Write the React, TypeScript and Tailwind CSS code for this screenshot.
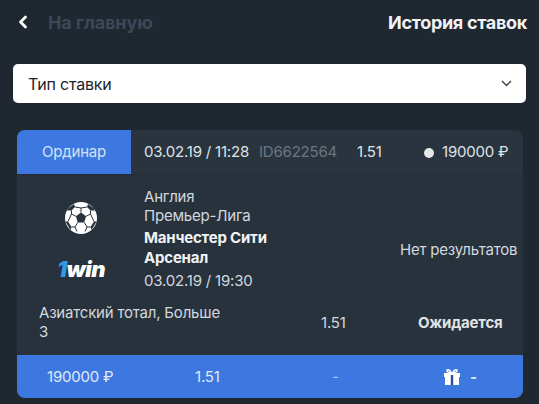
export default function App() {
  return (
    <div className="w-[539px] h-[404px] overflow-hidden bg-[#1f2731] font-['Inter','Noto_Sans',sans-serif] text-[#dfe3e7]">
      <div className="flex items-center justify-between h-[44px] pl-[17px] pr-[12px]">
        <div className="flex items-center">
          <svg width="12" height="14" viewBox="0 0 12 14" fill="none" stroke="#fff" strokeWidth="2.8" strokeLinecap="round" strokeLinejoin="round">
            <path d="M8.5 2 L3.5 7 L8.5 12" />
          </svg>
          <span className="ml-[19px] text-[18px] font-bold text-[#3c4856] tracking-[-0.1px]">На главную</span>
        </div>
        <span className="text-[18px] font-bold text-[#f2f3f5] tracking-[-0.3px]">История ставок</span>
      </div>

      <div className="mx-[13px] mt-[20px] h-[39px] bg-white rounded-[5px] flex items-center justify-between pl-[15px] pr-[14px]">
        <span className="text-[16px] text-[#1e2328] tracking-[-0.2px]">Тип ставки</span>
        <svg width="11" height="7" viewBox="0 0 11 7" fill="none" stroke="#39414a" strokeWidth="1.4">
          <path d="M1 1 L5.5 5.5 L10 1" />
        </svg>
      </div>

      <div className="mx-[17px] mt-[27px] w-[506px] rounded-[8px] overflow-hidden bg-[#28323d]">
        <div className="flex h-[45px] bg-[#29343f] border-b border-[#242d37] text-[15px] tracking-[-0.2px]">
          <div className="w-[114px] h-full flex items-center justify-center pt-[1px] bg-[#3c78e0] text-[#d5e3f8]">Ординар</div>
          <div className="flex-1 flex items-center pt-[1px]">
            <span className="ml-[13px] w-[115px] text-[#dfe3e7]">03.02.19 / 11:28</span>
            <span className="w-[98px] text-[#6b7580]">ID6622564</span>
            <span className="w-[67px]">1.51</span>
            <span className="w-[18px] flex"><span className="w-[10px] h-[10px] rounded-full bg-[#e4e6e8]" /></span>
            <span>190000 ₽</span>
          </div>
        </div>

        <div className="h-[180px] flex flex-col">
          <div className="flex h-[123px] pt-[12px]">
            <div className="w-[127px] shrink-0 flex flex-col items-center pl-[1px]">
              <svg className="mt-[15px]" width="32" height="32" viewBox="-16 -16 32 32">
                <circle r="16" fill="#fff" />
                <g fill="#28323d">
                  <path d="M0 -5.4 L5.1 -1.7 L3.2 4.4 L-3.2 4.4 L-5.1 -1.7 Z" />
                  <path d="M-12.5 -10 L-7 -14 L-6 -11 L-9.5 -7.5 L-14 -7.5 Z" />
                  <path d="M12.5 -10 L7 -14 L6 -11 L9.5 -7.5 L14 -7.5 Z" />
                  <path d="M-15.6 3.5 L-13 3.5 L-9.5 9 L-10.5 12 Z" />
                  <path d="M15.6 3.5 L13 3.5 L9.5 9 L10.5 12 Z" />
                </g>
                <g stroke="#28323d" strokeWidth="1">
                  <path d="M0 -5.4 V-10 M5.1 -1.7 L9.5 -4 M-5.1 -1.7 L-9.5 -4 M3.2 4.4 L6 9 M-3.2 4.4 L-6 9" />
                  <path d="M-6 -11 L0 -10 L6 -11 M9.5 -7.5 L9.5 -4 L13 3.5 M-9.5 -7.5 L-9.5 -4 L-13 3.5 M-9.5 9 L-6 9 L-4 13.5 M9.5 9 L6 9 L4 13.5" fill="none" />
                </g>
              </svg>
              <div className="mt-[22px] h-[26px] text-[22px] leading-[26px] font-black italic text-white tracking-[-0.6px]">
                <span className="text-[#2f9be8]">1</span>win
              </div>
            </div>
            <div className="w-[246px] text-[15px] leading-[19px] tracking-[-0.2px] text-[#d3d8dd]">
              <div>Англия</div>
              <div>Премьер-Лига</div>
              <div className="font-bold text-[#f0f2f4] mt-[3px] leading-[20px]">Манчестер Сити</div>
              <div className="font-bold text-[#f0f2f4] leading-[20px]">Арсенал</div>
              <div className="mt-[3px]">03.02.19 / 19:30</div>
            </div>
            <div className="flex-1 text-[15px] tracking-[-0.2px] text-[#d3d8dd] pl-[10px] mt-[52px] whitespace-nowrap">Нет результатов</div>
          </div>
          <div className="flex items-center h-[48px] text-[15px] leading-[19px] tracking-[-0.2px] text-[#d3d8dd]">
            <div className="w-[304px] pl-[22px] pr-[90px] shrink-0">Азиатский тотал, Больше 3</div>
            <div className="w-[97px]">1.51</div>
            <div className="font-bold text-[#e0e3e6]">Ожидается</div>
          </div>
        </div>

        <div className="flex items-center h-[43px] pt-[1px] bg-[#3c78e0] text-[15px] tracking-[-0.2px] text-[#e0e9f8]">
          <span className="w-[178px] pl-[30px]">190000 ₽</span>
          <span className="w-[137px]">1.51</span>
          <span className="w-[111px] text-[#a9c4ef]">-</span>
          <svg width="18" height="18" viewBox="0 0 18 18">
            <path d="M1 5 H17 V9 H16 V17 H2 V9 H1 Z" fill="#fff" />
            <path d="M7.8 7 H10.2 V17 H7.8 Z" fill="#2b4f8f" />
            <path d="M8.3 4.6 C6.5 1 3.5 1 4 3 C4.2 4.2 6 4.6 8.3 4.6 Z M9.7 4.6 C11.5 1 14.5 1 14 3 C13.8 4.2 12 4.6 9.7 4.6 Z" fill="none" stroke="#fff" strokeWidth="1.5" />
          </svg>
          <span className="ml-[9px] font-bold">-</span>
        </div>
      </div>
    </div>
  );
}
